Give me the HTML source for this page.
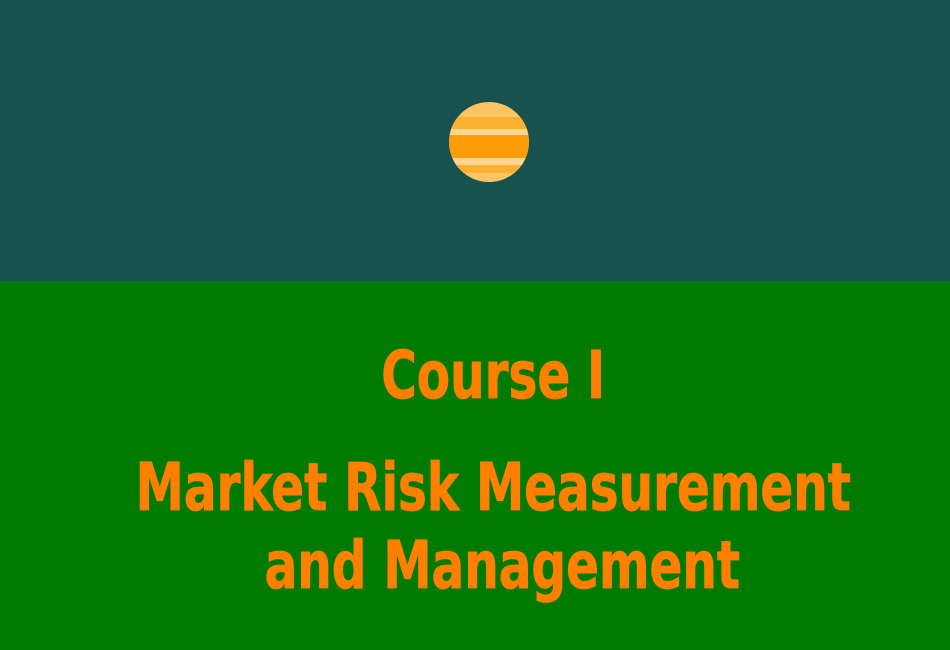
<!DOCTYPE html>
<html><head><style>
html,body{margin:0;padding:0;}
body{width:950px;height:650px;position:relative;overflow:hidden;background:#007a00;}
.top{position:absolute;left:0;top:0;width:950px;height:281px;background:#17524f;}
.t{position:absolute;left:0;width:950px;text-align:center;color:#ff7f00;font-family:"DejaVu Sans Condensed","DejaVu Sans","Liberation Sans",sans-serif;font-stretch:condensed;font-weight:bold;font-size:66px;line-height:1;white-space:nowrap;-webkit-text-stroke:0.8px #ff7f00;}
.t span{display:inline-block;transform:scaleX(0.816);transform-origin:center;}
</style></head><body>
<div class="top"></div>
<svg style="position:absolute;left:0;top:0" width="950" height="281">
<defs><clipPath id="c"><circle cx="489" cy="142" r="40"/></clipPath></defs>
<g clip-path="url(#c)">
<rect x="449" y="102" width="80" height="80" fill="#fdc463"/>
<rect x="449" y="117" width="80" height="12" fill="#fcb034"/>
<rect x="449" y="129" width="80" height="6" fill="#fcd690"/>
<rect x="449" y="135" width="80" height="23" fill="#fb9d07"/>
<rect x="449" y="158" width="80" height="7" fill="#fcd690"/>
<rect x="449" y="165" width="80" height="8" fill="#fcb034"/>
</g>
</svg>
<div class="t" style="top:343px;left:18px"><span>Course I</span></div>
<div class="t" style="top:455px;left:18px"><span>Market Risk Measurement</span></div>
<div class="t" style="top:533px;left:27px"><span>and Management</span></div>
</body></html>
